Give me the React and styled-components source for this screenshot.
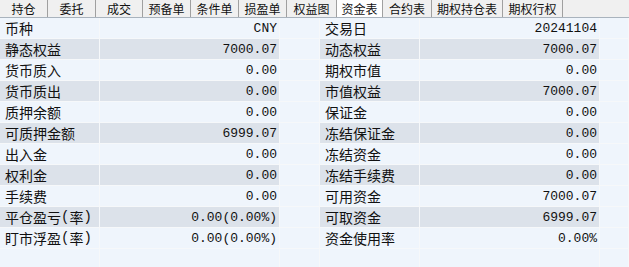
import React from "react";
import styled, { createGlobalStyle } from "styled-components";

const Global = createGlobalStyle`
  html, body { margin: 0; padding: 0; background: #eff5fc; }
  body { width: 629px; height: 267px; overflow: hidden; }
`;

const Wrap = styled.div`
  width: 629px;
  height: 267px;
  display: flex;
  flex-direction: column;
  background: #eff5fc;
  overflow: hidden;
`;

const TabBar = styled.div`
  height: 17px;
  display: flex;
  background: #f0f0f0;
  border-bottom: 1px solid #a9b3bd;
  box-sizing: content-box;
`;

const Tab = styled.div`
  width: ${(p) => p.$w}px;
  height: 17px;
  box-sizing: border-box;
  display: flex;
  align-items: center;
  justify-content: center;
  font-family: "Noto Sans CJK SC", sans-serif;
  font-size: 12px;
  color: #111;
  background: ${(p) => (p.$active ? "#ffffff" : "#f0f0f0")};
  border-right: 1px solid #a0a0a0;
`;

const Grid = styled.div`
  display: grid;
  grid-template-columns: 100px 180px 40px 100px 180px 1fr;
  grid-auto-rows: 21px;
`;

const Cell = styled.div`
  box-sizing: border-box;
  height: 21px;
  border-bottom: 1px solid #f6f8fa;
  border-right: 1px solid #f6f8fa;
  background: ${(p) => (p.$dark ? "#dce2ea" : "#eff5fc")};
  display: flex;
  align-items: center;
  overflow: hidden;
  white-space: nowrap;
`;

const Label = styled(Cell)`
  padding-left: 5px;
  font-family: "Noto Sans CJK SC", sans-serif;
  font-size: 14px;
  color: #111;
`;

const Paren = styled.span`
  font-family: "Liberation Mono", monospace;
  font-size: 14px;
`;

const Value = styled(Cell)`
  justify-content: flex-end;
  padding-right: 2px;
  font-family: "Liberation Mono", monospace;
  font-size: 13px;
  color: #111;
`;

const tabs = [
  ["持仓", 48],
  ["委托", 48],
  ["成交", 47],
  ["预备单", 48],
  ["条件单", 48],
  ["损盈单", 48],
  ["权益图", 50],
  ["资金表", 46, true],
  ["合约表", 49],
  ["期权持仓表", 71],
  ["期权行权", 60],
];

const rows = [
  ["币种", "CNY", "交易日", "20241104"],
  ["静态权益", "7000.07", "动态权益", "7000.07"],
  ["货币质入", "0.00", "期权市值", "0.00"],
  ["货币质出", "0.00", "市值权益", "7000.07"],
  ["质押余额", "0.00", "保证金", "0.00"],
  ["可质押金额", "6999.07", "冻结保证金", "0.00"],
  ["出入金", "0.00", "冻结资金", "0.00"],
  ["权利金", "0.00", "冻结手续费", "0.00"],
  ["手续费", "0.00", "可用资金", "7000.07"],
  ["平仓盈亏(率)", "0.00(0.00%)", "可取资金", "6999.07"],
  ["盯市浮盈(率)", "0.00(0.00%)", "资金使用率", "0.00%"],
  ["", "", "", ""],
];

function renderLabel(text) {
  const m = text.match(/^(.*)\((.*)\)$/);
  if (!m) return text;
  return (
    <>
      {m[1]}
      <Paren>(</Paren>
      {m[2]}
      <Paren>)</Paren>
    </>
  );
}

export default function App() {
  return (
    <Wrap>
      <Global />
      <TabBar>
        {tabs.map(([t, w, a]) => (
          <Tab key={t} $w={w} $active={a}>
            {t}
          </Tab>
        ))}
      </TabBar>
      <Grid>
        {rows.map((r, i) => {
          const dark = i % 2 === 1 && r[0] !== "";
          return (
            <React.Fragment key={i}>
              <Label $dark={dark}>{renderLabel(r[0])}</Label>
              <Value $dark={dark}>{r[1]}</Value>
              <Cell />
              <Label $dark={dark}>{renderLabel(r[2])}</Label>
              <Value $dark={dark}>{r[3]}</Value>
              <Cell />
            </React.Fragment>
          );
        })}
      </Grid>
    </Wrap>
  );
}
